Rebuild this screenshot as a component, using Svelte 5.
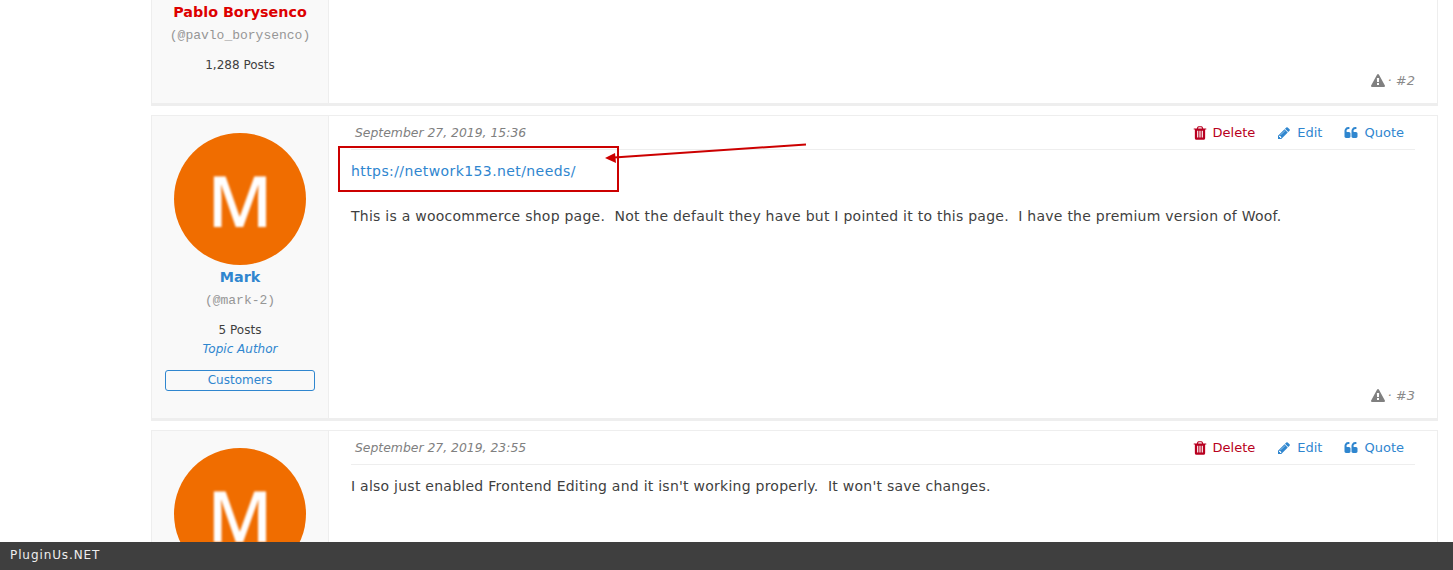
<script>
  const trash = "M704 1376v-704q0-14-9-23t-23-9h-64q-14 0-23 9t-9 23v704q0 14 9 23t23 9h64q14 0 23-9t9-23zm256 0v-704q0-14-9-23t-23-9h-64q-14 0-23 9t-9 23v704q0 14 9 23t23 9h64q14 0 23-9t9-23zm256 0v-704q0-14-9-23t-23-9h-64q-14 0-23 9t-9 23v704q0 14 9 23t23 9h64q14 0 23-9t9-23zm-544-992h448l-48-117q-7-9-17-11h-317q-10 2-17 11zm928 32v64q0 14-9 23t-23 9h-96v948q0 83-47 143.5t-113 60.5h-832q-66 0-113-58.5t-47-141.5v-952h-96q-14 0-23-9t-9-23v-64q0-14 9-23t23-9h309l70-167q15-37 54-63t79-26h320q40 0 79 26t54 63l70 167h309q14 0 23 9t9 23z";
  const pencil = "M491 1536l91-91-235-235-91 91v107h128v128h107zm523-928q0-22-22-22-10 0-17 7l-542 542q-7 7-7 17 0 22 22 22 10 0 17-7l542-542q7-7 7-17zm-54-192l416 416-832 832h-416v-416zm683 96q0 53-37 90l-166 166-416-416 166-165q36-38 90-38 53 0 91 38l235 234q37 39 37 91z";
  const quote = "M832 960v384q0 80-56 136t-136 56h-384q-80 0-136-56t-56-136v-704q0-104 40.5-198.5t109.5-163.5 163.5-109.5 198.5-40.5h64q26 0 45 19t19 45v128q0 26-19 45t-45 19h-64q-106 0-181 75t-75 181v32q0 40 28 68t68 28h224q80 0 136 56t56 136zm896 0v384q0 80-56 136t-136 56h-384q-80 0-136-56t-56-136v-704q0-104 40.5-198.5t109.5-163.5 163.5-109.5 198.5-40.5h64q26 0 45 19t19 45v128q0 26-19 45t-45 19h-64q-106 0-181 75t-75 181v32q0 40 28 68t68 28h224q80 0 136 56t56 136z";
  const warning = "M1024 1375v-190q0-14-9.5-23.5t-22.5-9.5h-192q-13 0-22.5 9.5t-9.5 23.5v190q0 14 9.5 23.5t22.5 9.5h192q13 0 22.5-9.5t9.5-23.5zm-2-374l18-459q0-12-10-19-13-11-24-11h-220q-11 0-24 11-10 7-10 21l17 457q0 10 10 16.5t24 6.5h185q14 0 23.5-6.5t10.5-16.5zm-14-934l768 1408q35 63-2 126-17 29-46.5 46t-63.5 17h-1536q-34 0-63.5-17t-46.5-46q-37-63-2-126l768-1408q17-31 47-49t65-18 65 18 47 49z";

  const posts = [
    { id: 2, name: "Pablo Borysenco", handle: "@pavlo_borysenco", count: "1,288 Posts", admin: true, date: "", paragraphs: [] },
    { id: 3, name: "Mark", handle: "@mark-2", count: "5 Posts", author: true, group: "Customers", date: "September 27, 2019, 15:36", link: "https://network153.net/needs/",
      paragraphs: ["This is a woocommerce shop page.\u00a0 Not the default they have but I pointed it to this page.\u00a0 I have the premium version of Woof."] },
    { id: 4, name: "Mark", handle: "@mark-2", count: "5 Posts", author: true, group: "Customers", date: "September 27, 2019, 23:55",
      paragraphs: ["I also just enabled Frontend Editing and it isn't working properly.\u00a0 It won't save changes."] }
  ];
</script>

<div class="page">
  <div class="topic">
    {#each posts as post}
      <div class="post">
        <div class="author">
          <div class="avatar"><span>M</span></div>
          <a class="name" class:admin={post.admin} href="#top">{post.name}</a>
          <div class="handle">(@{post.handle.slice(1)})</div>
          <div class="count">{post.count}</div>
          {#if post.author}
            <div class="role">Topic Author</div>
            <div class="group">{post.group}</div>
          {/if}
        </div>
        <div class="body">
          {#if post.date}
            <div class="head">
              <span class="date">{post.date}</span>
              <div class="actions">
                <a class="delete" href="#top"><svg viewBox="0 0 1792 1792"><path d={trash} /></svg>Delete</a>
                <a href="#top"><svg viewBox="0 0 1792 1792"><path d={pencil} /></svg>Edit</a>
                <a href="#top"><svg viewBox="0 0 1792 1792"><path d={quote} /></svg>Quote</a>
              </div>
            </div>
          {/if}
          <div class="text">
            {#if post.link}
              <p><a href="#top">{post.link}</a></p>
            {/if}
            {#each post.paragraphs as par}
              <p>{par}</p>
            {/each}
          </div>
          <div class="foot">
            <svg viewBox="0 0 1792 1792"><path d={warning} /></svg>
            <span>· #{post.id}</span>
          </div>
        </div>
      </div>
    {/each}
  </div>

  <!-- annotation drawn on top of the screenshot -->
  <div class="mark-box"></div>
  <svg class="mark-arrow" width="1453" height="570">
    <line x1="806" y1="144.5" x2="614" y2="157.5" stroke="#cc0000" stroke-width="2" />
    <polygon points="605,158 615,153 616,163" fill="#cc0000" />
  </svg>

  <div class="bar">PluginUs.NET</div>
</div>

<style>
  :global(body) {
    margin: 0;
    background: #fff;
  }

  .page {
    position: relative;
    height: 570px;
    overflow: hidden;
    font-family: "DejaVu Sans", Verdana, sans-serif;
    font-size: 13px;
    color: #3f3f3f;
  }

  a {
    color: #2f86cf;
    text-decoration: none;
  }

  .topic {
    margin: -150px 15px 0 151px;
  }

  .post {
    box-sizing: border-box;
    min-height: 256px;
    display: flex;
    border: 1px solid #eeeeee;
    border-bottom-width: 3px;
    margin-bottom: 9px;
  }

  .author {
    box-sizing: border-box;
    width: 177px;
    flex-shrink: 0;
    background: #f9f9f9;
    border-right: 1px solid #eeeeee;
    padding: 17px 13px 27px;
    display: flex;
    flex-direction: column;
    align-items: center;
    text-align: center;
    font-size: 12px;
  }

  .avatar {
    width: 132px;
    height: 132px;
    border-radius: 50%;
    background: #f06d00;
    display: flex;
    align-items: center;
    justify-content: center;
    color: #fff;
    font-family: "Open Sans", sans-serif;
    font-weight: 600;
    font-size: 71px;
    line-height: 1;
  }

  .avatar span {
    filter: blur(0.8px);
  }

  .name {
    margin-top: 3px;
    font-size: 14.3px;
    font-weight: bold;
    line-height: 18px;
  }

  .name.admin {
    color: #dd0000;
  }

  .handle {
    margin-top: 7px;
    font-family: "Liberation Mono", monospace;
    font-size: 13px;
    line-height: 16px;
    color: #969696;
  }

  .count {
    margin-top: 13px;
    line-height: 16px;
  }

  .role {
    margin-top: 3px;
    line-height: 16px;
    font-style: italic;
    color: #2f86cf;
  }

  .group {
    box-sizing: border-box;
    width: 150px;
    margin-top: 13px;
    height: 21px;
    line-height: 19px;
    border: 1px solid #2f86cf;
    border-radius: 3px;
    color: #2f86cf;
  }

  .body {
    flex: 1;
    display: flex;
    flex-direction: column;
    padding: 0 22px;
  }

  .head {
    display: flex;
    justify-content: space-between;
    align-items: center;
    height: 33px;
    border-bottom: 1px solid #eeeeee;
    padding: 0 11px 0 4px;
  }

  .date {
    font-style: italic;
    color: #808080;
    font-size: 12.4px;
  }

  .actions {
    display: flex;
    gap: 22px;
  }

  .actions a {
    display: flex;
    align-items: center;
    gap: 6px;
  }

  .actions svg {
    width: 14px;
    height: 14px;
    fill: currentColor;
  }

  .actions a.delete {
    color: #b80020;
  }

  .actions a.delete svg {
    width: 16px;
    height: 16px;
    margin: -1px -1px -1px -1px;
  }

  .text {
    padding-top: 11px;
    line-height: 20px;
    font-size: 14px;
    letter-spacing: 0.25px;
  }

  .text p {
    margin: 0 0 25px;
  }

  .text a {
    letter-spacing: 0.41px;
  }

  .foot {
    margin-top: auto;
    height: 30px;
    display: flex;
    justify-content: flex-end;
    align-items: flex-start;
    gap: 3px;
    font-style: italic;
    color: #8a8a8a;
    line-height: 16px;
  }

  .foot svg {
    width: 14px;
    height: 14px;
    margin-top: 1px;
    fill: #808080;
  }

  .mark-box {
    position: absolute;
    left: 338px;
    top: 146px;
    width: 277px;
    height: 42px;
    border: 2px solid #cc0000;
  }

  .mark-arrow {
    position: absolute;
    left: 0;
    top: 0;
    pointer-events: none;
  }

  .bar {
    position: absolute;
    left: 0;
    right: 0;
    bottom: 0;
    height: 28px;
    line-height: 27px;
    padding-left: 10px;
    background: #3f3f3f;
    color: #eeeeee;
    font-size: 12px;
    letter-spacing: 0.9px;
  }
</style>
